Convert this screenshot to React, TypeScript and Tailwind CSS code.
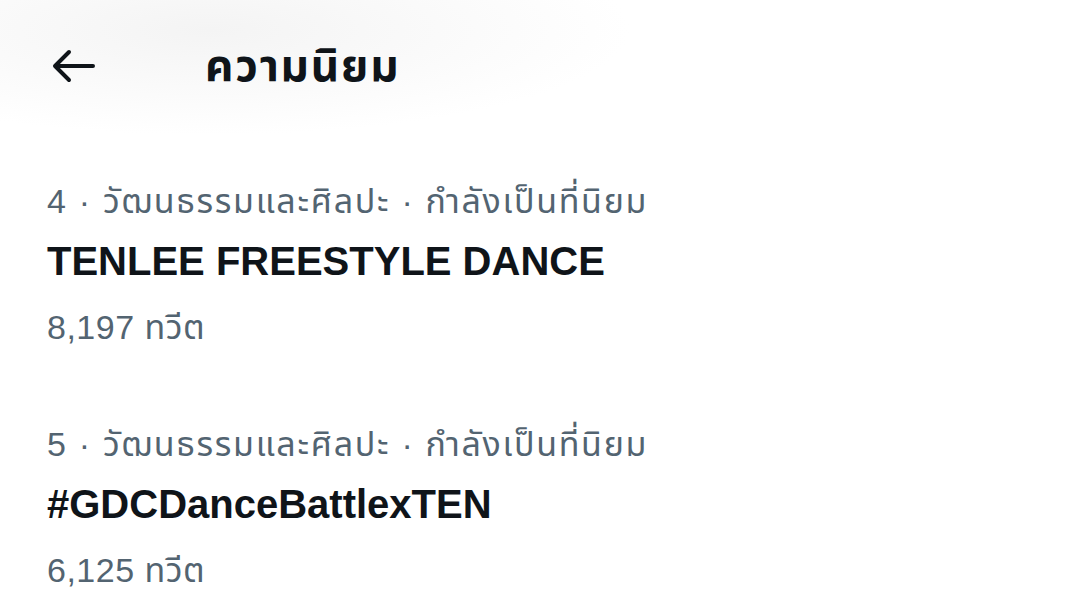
import React from "react";

const font = { fontFamily: '"Liberation Sans", "Noto Sans Thai", "Noto Sans", sans-serif' };

function Trend({ rank, title, count }: { rank: number; title: string; count: string }) {
  return (
    <div className="flex flex-col px-[47px]">
      <div className="text-[34px] leading-[40px] tracking-[1.7px] text-[#536471] whitespace-nowrap">
        {rank}&nbsp;·&nbsp;วัฒนธรรมและศิลปะ&nbsp;·&nbsp;กำลังเป็นที่นิยม
      </div>
      <div className="mt-[18px] text-[40px] leading-[44px] font-bold text-[#0f1419] whitespace-nowrap">{title}</div>
      <div className="mt-[24px] text-[34px] leading-[40px] tracking-[0.5px] text-[#536471] whitespace-nowrap">{count}</div>
    </div>
  );
}

export default function App() {
  return (
    <div className="w-[1069px] h-[605px] bg-white overflow-hidden" style={font}>
      <div className="h-[135px] flex items-center pb-[4px] bg-[radial-gradient(ellipse_420px_105px_at_210px_30px,#f4f4f4,#ffffff)]">
        <div className="w-[205px] flex items-center pl-[52px]">
          <svg width="44" height="34" viewBox="0 0 44 34" fill="none" stroke="#0f1419" strokeWidth="4" strokeLinecap="round" strokeLinejoin="round">
            <path d="M41 17H4M17 3L3 17l14 14" />
          </svg>
        </div>
        <div className="text-[44px] tracking-[1.8px] font-bold text-[#0f1419] leading-none">ความนิยม</div>
      </div>
      <div className="flex flex-col gap-[77px] pt-[46px]">
        <Trend rank={4} title="TENLEE FREESTYLE DANCE" count="8,197 ทวีต" />
        <Trend rank={5} title="#GDCDanceBattlexTEN" count="6,125 ทวีต" />
      </div>
    </div>
  );
}
